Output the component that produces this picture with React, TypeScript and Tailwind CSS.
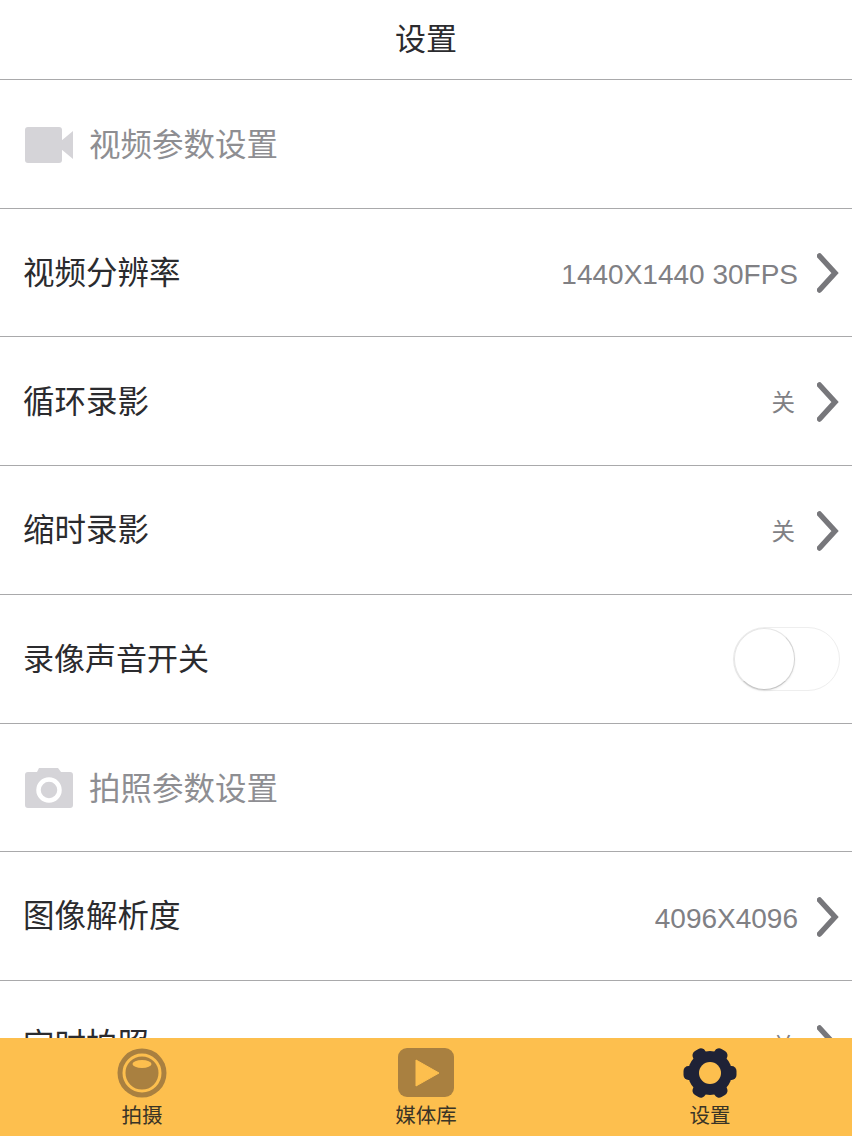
const FONT = "font-['Liberation_Sans','Noto_Sans_CJK_SC',sans-serif]";

function Chevron() {
  return (
    <svg width="22" height="40" viewBox="0 0 22 40" className="ml-[19px] mr-[1px] mt-[1px] shrink-0">
      <path d="M2.5 3 L18 20 L2.5 37" fill="none" stroke="#77777b" strokeWidth="5.5" strokeLinecap="round" />
    </svg>
  );
}

function VideoIcon() {
  return (
    <svg width="50" height="38" viewBox="0 0 50 38" className="mt-[2px] shrink-0">
      <rect x="1" y="1" width="37" height="36" rx="3" fill="#d5d4d8" />
      <path d="M37 15 L49 5 V33 L37 23 Z" fill="#d5d4d8" />
    </svg>
  );
}

function CameraIcon() {
  return (
    <svg width="50" height="42" viewBox="0 0 50 42" className="mt-[2px] shrink-0">
      <path d="M4 5 H13 L15 1 H34 L37 5 H46 Q49 5 49 8 V38 Q49 41 46 41 H4 Q1 41 1 38 V8 Q1 5 4 5 Z" fill="#d5d4d8" />
      <circle cx="25" cy="23" r="10.5" fill="none" stroke="#ffffff" strokeWidth="4.5" />
    </svg>
  );
}

function GearIcon() {
  return (
    <svg width="54" height="50" viewBox="-27 -25 54 50">
      <circle r="22" fill="#1f2236" />
      {[0, 60, 120].map((deg) => (
        <rect key={deg} x="-26.5" y="-7" width="53" height="14" rx="5" fill="#1f2236" transform={`rotate(${deg})`} />
      ))}
      <circle r="11" fill="#fdbf4e" />
    </svg>
  );
}

function Row({ label, value }: { label: string; value: string }) {
  return (
    <div className="flex h-[128.72px] shrink-0 items-center justify-between border-b border-[#a9a9ab] pl-[23px] pr-[12px]">
      <span className="pt-[2px] text-[31.5px] leading-none text-[#2b2b2e]">{label}</span>
      <div className="flex items-center">
        {value === '关' ? (
          <span className="pr-[3px] pt-[5px] text-[23.5px] leading-none text-[#808084]">{value}</span>
        ) : (
          <span className="pt-[5px] text-[28px] leading-none text-[#808084]">{value}</span>
        )}
        <Chevron />
      </div>
    </div>
  );
}

function Section({ icon, label }: { icon: React.ReactNode; label: string }) {
  return (
    <div className="flex h-[128.72px] shrink-0 items-center gap-[15px] border-b border-[#a9a9ab] pl-[24px]">
      {icon}
      <span className="pt-[4px] text-[31.5px] leading-none text-[#8e8e92]">{label}</span>
    </div>
  );
}

export default function App() {
  return (
    <div className={`flex h-[1136px] w-[852px] flex-col overflow-hidden bg-white ${FONT}`}>
      <header className="flex h-[80px] shrink-0 items-center justify-center border-b border-[#a9a9ab]">
        <span className="text-[31px] leading-none text-[#2b2b2e]">设置</span>
      </header>

      <main className="flex min-h-0 flex-1 flex-col overflow-hidden">
        <Section icon={<VideoIcon />} label="视频参数设置" />
        <Row label="视频分辨率" value="1440X1440 30FPS" />
        <Row label="循环录影" value="关" />
        <Row label="缩时录影" value="关" />
        <div className="flex h-[128.72px] shrink-0 items-center justify-between border-b border-[#a9a9ab] pl-[23px] pr-[12px]">
          <span className="pt-[2px] text-[31px] leading-none text-[#2b2b2e]">录像声音开关</span>
          <div className="relative h-[64px] w-[107px] rounded-full border border-[#eeeeee] bg-white">
            <div className="absolute left-0 top-0 h-[62px] w-[61px] rounded-full border border-[#e6e6e6] border-b-[#c4c4c4] border-r-[#d4d4d4] bg-white shadow-[0_1px_2px_rgba(0,0,0,0.08)]" />
          </div>
        </div>
        <Section icon={<CameraIcon />} label="拍照参数设置" />
        <Row label="图像解析度" value="4096X4096" />
        <Row label="定时拍照" value="关" />
      </main>

      <nav className="grid h-[98px] shrink-0 grid-cols-3 bg-[#fdbf4e]">
        <div className="flex flex-col items-center pt-[10px]">
          <svg width="50" height="50" viewBox="0 0 50 50">
            <circle cx="25" cy="25" r="24.5" fill="#a98040" />
            <circle cx="25" cy="25" r="18" fill="none" stroke="#fdbf4e" strokeWidth="3" />
            <ellipse cx="25" cy="16" rx="9.5" ry="4" fill="#fdbf4e" />
          </svg>
          <span className="mt-[4px] text-[20.5px] leading-[28px] text-[#3a3426]">拍摄</span>
        </div>
        <div className="flex flex-col items-center pt-[10px]">
          <svg width="56" height="50" viewBox="0 0 56 50">
            <rect width="56" height="49" rx="9" fill="#a98040" />
            <path d="M18 12 L41 25 L18 38 Z" fill="#fdbf4e" strokeLinejoin="round" stroke="#fdbf4e" strokeWidth="1" />
          </svg>
          <span className="mt-[4px] text-[20.5px] leading-[28px] text-[#3a3426]">媒体库</span>
        </div>
        <div className="flex flex-col items-center pt-[10px]">
          <GearIcon />
          <span className="mt-[4px] text-[20.5px] leading-[28px] text-[#3a3426]">设置</span>
        </div>
      </nav>
    </div>
  );
}
